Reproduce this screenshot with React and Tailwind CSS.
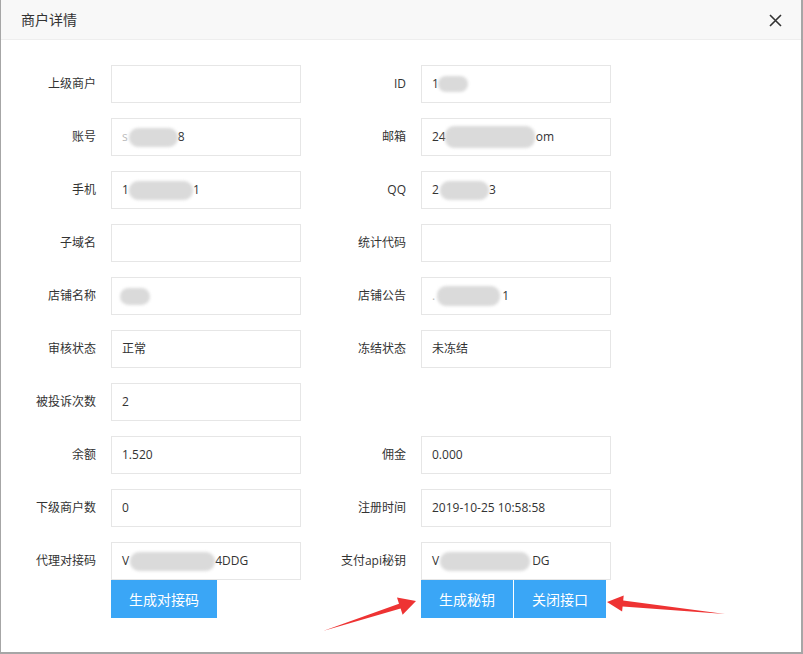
import React from 'react';

const Blur = ({ w, h = 19, className = '' }) => (
    <span
        className={`inline-block rounded-[9px] bg-[#dadada] blur-[1.5px] align-middle ${className}`}
        style={{ width: w, height: h }}
    />
);

const Field = ({ label, children }) => (
    <div className="flex w-[300px]">
        <div className="w-[110px] shrink-0 px-[15px] py-[9px] text-right text-[12px] leading-[20px] text-[#333]">{label}</div>
        <div className="w-[190px] shrink-0">{children}</div>
    </div>
);

const Box = ({ children }) => (
    <div className="flex h-[38px] items-center border border-[#e6e6e6] bg-white pl-[10px] text-[12px] text-[#333] whitespace-nowrap overflow-hidden">
        {children}
    </div>
);

export default function App() {
    const rows = [
        [
            { label: '上级商户', value: null },
            { label: 'ID', value: <><span>1</span><Blur w={30} h={16} className="-ml-[1px]" /></> },
        ],
        [
            { label: '账号', value: <><span className="text-[#bbb]">s</span><Blur w={49} className="ml-[1px]" /><span>8</span></> },
            { label: '邮箱', value: <><span>24</span><Blur w={90} h={22} className="-ml-[1px]" /><span className="ml-[1px]">om</span></> },
        ],
        [
            { label: '手机', value: <><span>1</span><Blur w={64} /><span>1</span></> },
            { label: 'QQ', value: <><span>2</span><Blur w={49} className="ml-[1px]" /><span>3</span></> },
        ],
        [
            { label: '子域名', value: null },
            { label: '统计代码', value: null },
        ],
        [
            { label: '店铺名称', value: <Blur w={30} h={17} className="-ml-[2px]" /> },
            { label: '店铺公告', value: <><span className="text-[#bbb]">.</span><Blur w={63} h={20} className="ml-[2px]" /><span className="ml-[2px]">1</span></> },
        ],
        [
            { label: '审核状态', value: '正常' },
            { label: '冻结状态', value: '未冻结' },
        ],
        [
            { label: '被投诉次数', value: '2' },
            null,
        ],
        [
            { label: '余额', value: '1.520' },
            { label: '佣金', value: '0.000' },
        ],
        [
            { label: '下级商户数', value: '0' },
            { label: '注册时间', value: '2019-10-25 10:58:58' },
        ],
    ];

    return (
        <div
            className="relative h-[654px] w-[803px] overflow-hidden border-l border-r-2 border-b-2 border-[#a6a6a6] bg-white text-[14px]"
            style={{ fontFamily: '"Open Sans", "Noto Sans CJK SC", sans-serif' }}
        >
            {/* title bar */}
            <div className="flex h-[40px] items-center justify-between border-b border-[#eee] bg-[#f8f8f8] pl-[20px] pr-[19px] text-[#333]">
                <span>商户详情</span>
                <svg width="13" height="13" viewBox="0 0 13 13" className="mt-[1px]">
                    <path d="M1 1 L12 12 M12 1 L1 12" stroke="#333" strokeWidth="1.6" />
                </svg>
            </div>

            {/* form */}
            <div className="flex flex-col gap-[15px] pt-[25px]">
                {rows.map((row, i) => (
                    <div key={i} className="flex gap-[10px]">
                        {row.map((f, j) =>
                            f ? (
                                <Field key={j} label={f.label}>
                                    <Box>{f.value}</Box>
                                </Field>
                            ) : (
                                <div key={j} className="w-[300px]" />
                            )
                        )}
                    </div>
                ))}

                <div className="flex gap-[10px]">
                    <Field label="代理对接码">
                        <Box><span>V</span><Blur w={85} className="ml-[1px]" /><span>4DDG</span></Box>
                        <button className="h-[38px] bg-[#3aa6f6] px-[18px] text-white">生成对接码</button>
                    </Field>
                    <Field label="支付api秘钥">
                        <Box><span>V</span><Blur w={90} className="ml-[1px]" /><span className="ml-[2px]">DG</span></Box>
                        <div className="flex">
                            <button className="h-[38px] bg-[#3aa6f6] px-[18px] text-white">生成秘钥</button>
                            <button className="h-[38px] border-l border-white bg-[#3aa6f6] px-[18px] text-white">关闭接口</button>
                        </div>
                    </Field>
                </div>
            </div>

            {/* annotation arrows */}
            <svg className="pointer-events-none absolute left-[-1px] top-0" width="803" height="654" viewBox="0 0 803 654">
                <polygon
                    points="323,631 399,603.8 397,597.6 416,601 402.6,614.8 400.6,608.6"
                    fill="#ee3333"
                />
                <polygon
                    points="725,614 623.2,600.6 623.7,595.6 607,602 622.1,611.6 622.6,606.6"
                    fill="#ee3333"
                />
            </svg>
        </div>
    );
}
